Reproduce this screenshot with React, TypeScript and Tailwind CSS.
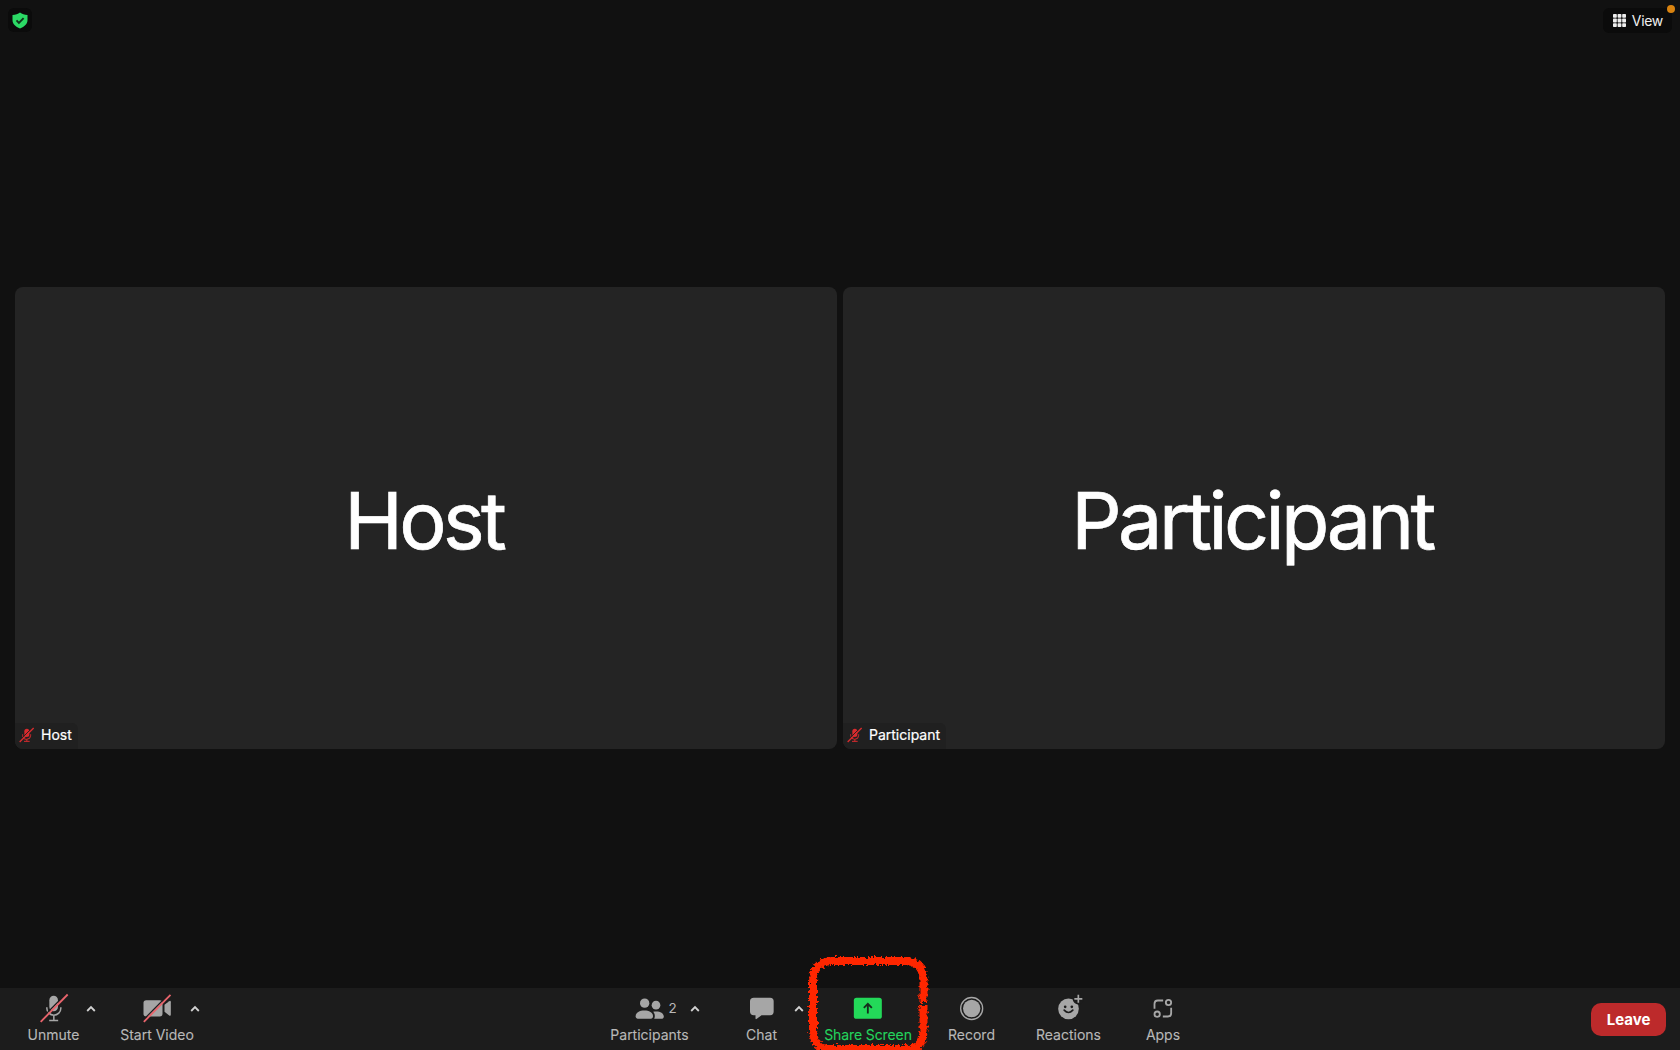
import type { ReactNode } from "react";

const ICON = "#a6a6a6";

function Chevron({ className }: { className: string }) {
  return (
    <svg viewBox="0 0 10 8" className={`absolute top-[17px] h-2 w-2.5 ${className}`} fill="none" stroke="#d2d2d2" strokeWidth="1.8">
      <path d="M1.200 6 5 2.100 8.800 6" />
    </svg>
  );
}

function Tool({ label, width, color = "text-[#b8b8b8]", track = "", children, extra }: {
  label: string;
  width: string;
  color?: string;
  track?: string;
  children: ReactNode;
  extra?: ReactNode;
}) {
  return (
    <div className={`relative flex h-full shrink-0 flex-col items-center pt-1 ${width} ${color}`}>
      <svg viewBox="1.500 0.500 96 96" className="h-8 w-8 shrink-0" fill={ICON}>
        {children}
      </svg>
      <span className={`mt-[1px] whitespace-nowrap text-[14px] leading-5 [-webkit-text-stroke:0.1px_currentColor] ${track}`}>{label}</span>
      {extra}
    </div>
  );
}

function MutedMic() {
  return (
    <svg viewBox="0 0 48 48" className="h-4 w-4 shrink-0" fill="#d92b2e">
      <rect x="16" y="5" width="15" height="25" rx="7.5" />
      <path d="M11 22v3a12 12 0 0 0 24 0v-3M23.500 37v6M15 43h17" fill="none" stroke="#d92b2e" strokeWidth="3" />
      <path d="M0 42 41 1" stroke="#232323" strokeWidth="3" />
      <path d="M2 45 44 3" stroke="#d92b2e" strokeWidth="4" />
    </svg>
  );
}

function Tile({ name, width, badge }: { name: string; width: string; badge: string }) {
  return (
    <section className={`relative flex h-[462px] shrink-0 items-center justify-center rounded-lg bg-[#242424] ${width}`}>
      <h2 className="mt-[5px] -ml-[4px] whitespace-nowrap text-[79px] leading-none tracking-[-3.600px] text-white [-webkit-text-stroke:0.7px_#ffffff]">
        {name}
      </h2>
      <div className={`absolute bottom-0 left-0 flex h-[26px] items-center gap-[6px] rounded-bl-lg rounded-tr-md bg-[#202020] pb-[2px] pl-[4px] ${badge}`}>
        <MutedMic />
        <span className="text-[14px] leading-5 text-white [-webkit-text-stroke:0.2px_#ffffff]">{name}</span>
      </div>
    </section>
  );
}

export default function App() {
  return (
    <div className="relative flex h-[1050px] w-[1680px] flex-col overflow-hidden bg-[#111111] font-['Inter',sans-serif]">
      <header className="relative flex h-10 shrink-0 items-center justify-between pl-2 pr-[8px]">
        <div className="flex h-6 w-6 items-center justify-center rounded-md bg-[#0b0b0b]">
          <svg viewBox="0 0 16 17" className="h-[17px] w-4">
            <path d="M8 .5C6 2.200 3.500 2.900.5 3v5c0 4 3 6.500 7.500 8.500 4.500-2 7.500-4.500 7.500-8.500V3C12.500 2.900 10 2.200 8 .5Z" fill="#2bd965" />
            <path d="m4.500 8.400 2.400 2.400 4.700-4.700" fill="none" stroke="#10321b" strokeWidth="1.900" />
          </svg>
        </div>
        <div className="flex h-[25px] items-center gap-[6px] rounded-md bg-[#0b0b0b] pl-[10px] pr-[9px]">
          <svg viewBox="0 0 13 13" className="h-[13px] w-[13px]" fill="#eeeeee">
            {[0, 4.600, 9.200].map((y) =>
              [0, 4.600, 9.200].map((x) => <rect key={`${x}-${y}`} x={x} y={y} width="3.800" height="3.800" rx=".7" />)
            )}
          </svg>
          <span className="mt-px text-[14px] leading-5 tracking-[-0.3px] text-[#f0f0f0]">View</span>
        </div>
        <span className="absolute right-[5px] top-[5px] h-2 w-2 rounded-full bg-[#d98310]" />
      </header>

      <main className="flex flex-1 items-start gap-[6.500px] px-[15px] pt-[247px]">
        <Tile name="Host" width="w-[821.500px]" badge="w-[63px]" />
        <Tile name="Participant" width="w-[822px]" badge="w-[103px]" />
      </main>

      <footer className="flex h-[62px] shrink-0 bg-[#1c1c1c] pl-[2px]">
        <Tool label="Unmute" width="w-[103px]" extra={<Chevron className="left-[84px]" />}>
          <rect x="35.500" y="12" width="26" height="46" rx="13" />
          <path d="M28 46v3a21 21 0 0 0 42 0v-3M49 70v15M35 86h27" fill="none" stroke={ICON} strokeWidth="4.500" />
          <path d="M6 86.500 87 4.500" stroke="#1c1c1c" strokeWidth="4" />
          <path d="M9.500 90 90.500 8" stroke="#e8646c" strokeWidth="5.500" />
        </Tool>
        <Tool label="Start Video" width="w-[104px]" extra={<Chevron className="left-[85px]" />}>
          <rect x="9" y="25" width="57" height="49" rx="8" />
          <path d="M72 39 86 28q5-3 5 3v37q0 6-5 3L72 60Z" />
          <path d="M6.500 86.500 86.500 5.500" stroke="#1c1c1c" strokeWidth="4" />
          <path d="M10 90 90 9" stroke="#e8646c" strokeWidth="5.500" />
        </Tool>
        <div className="ml-[384.500px] flex">
          <Tool
            label="Participants"
            width="w-[112px]"
            extra={
              <>
                <span className="absolute left-[75px] top-[10px] text-[13.500px] leading-5">2</span>
                <Chevron className="left-[96.500px]" />
              </>
            }
          >
            <circle cx="33.500" cy="34" r="14" />
            <path d="M6.500 73c0-11 12-17 26-17s26 6 26 17c0 6-4 8-9 8h-34c-5 0-9-2-9-8Z" />
            <circle cx="67.500" cy="40" r="13" />
            <path d="M59 60c15-4 32 2 32 14 0 5-3 7-8 7H62c3-7 3-14-3-21Z" />
          </Tool>
          <Tool label="Chat" width="w-[112px]" extra={<Chevron className="left-[88.500px]" />}>
            <path d="M25 18h49q10.500 0 10.500 10.500V59q0 11-10.500 11H48L34 81q-4 3-4-2v-9h-5q-11.500 0-11.500-11V28.500Q13.500 18 25 18Z" />
          </Tool>
          <Tool label="Share Screen" width="w-[101px]" color="text-[#23d45d]" track="tracking-[-0.1px]">
            <rect x="7" y="18" width="84" height="63" rx="8" fill="#23d959" />
            <path d="M49 65V36M37 48l12-12 12 12" fill="none" stroke="#152d1d" strokeWidth="5.500" />
          </Tool>
          <Tool label="Record" width="w-[106px]">
            <circle cx="48.500" cy="50" r="33" fill="none" stroke={ICON} strokeWidth="4" />
            <circle cx="48.500" cy="50" r="26" />
          </Tool>
          <Tool label="Reactions" width="w-[88px]">
            <circle cx="48" cy="51" r="31" />
            <circle cx="77.500" cy="21" r="17" fill="#1c1c1c" />
            <path d="M77.500 9v24M65.500 21h24" stroke={ICON} strokeWidth="5" />
            <circle cx="38" cy="45" r="4" fill="#1c1c1c" />
            <circle cx="58" cy="45" r="4" fill="#1c1c1c" />
            <path d="M35 55q13 14 26 0" fill="none" stroke="#1c1c1c" strokeWidth="5" strokeLinecap="round" />
          </Tool>
          <Tool label="Apps" width="w-[101px]">
            <g fill="none" stroke={ICON} strokeWidth="5.500">
              <circle cx="66" cy="32" r="8" />
              <circle cx="32" cy="67" r="8" />
              <path d="M24 51V36q0-10 10-10h16M74 48v16q0 10-10 10H49" />
            </g>
          </Tool>
        </div>
        <button className="ml-auto mr-[14px] mt-[15px] h-[33px] w-[75px] rounded-[10px] bg-[#bd2a2b] pt-px text-[15px] font-bold leading-8 text-white">
          Leave
        </button>
      </footer>

      {/* Hand-drawn marker around the Share Screen control */}
      <svg className="pointer-events-none absolute left-[800px] top-[950px] h-[100px] w-[140px]" viewBox="800 950 140 100" fill="none">
        <defs>
          <filter id="rough" x="-10%" y="-10%" width="120%" height="120%">
            <feTurbulence type="fractalNoise" baseFrequency="0.35" numOctaves="3" seed="4" />
            <feDisplacementMap in="SourceGraphic" scale="6" xChannelSelector="R" yChannelSelector="G" />
          </filter>
        </defs>
        <path
          d="M923.500 1002V981Q923.500 961 905 961H831Q813 962 813 982V1029Q813 1049 830 1049H907Q923.500 1049 923.500 1030V1006"
          stroke="#ff2600"
          strokeWidth="8"
          filter="url(#rough)"
        />
      </svg>
    </div>
  );
}
